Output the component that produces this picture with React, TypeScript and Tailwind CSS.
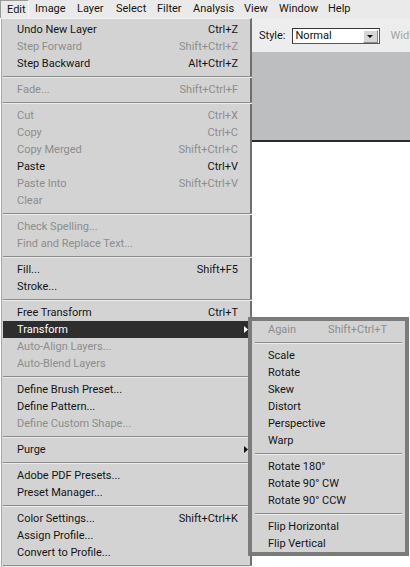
import React from "react";

type Row = { label: string; keys?: string; dim?: boolean; sub?: boolean; active?: boolean } | "sep";

const mainItems: Row[] = [
  { label: "Undo New Layer", keys: "Ctrl+Z" },
  { label: "Step Forward", keys: "Shift+Ctrl+Z", dim: true },
  { label: "Step Backward", keys: "Alt+Ctrl+Z" },
  "sep",
  { label: "Fade...", keys: "Shift+Ctrl+F", dim: true },
  "sep",
  { label: "Cut", keys: "Ctrl+X", dim: true },
  { label: "Copy", keys: "Ctrl+C", dim: true },
  { label: "Copy Merged", keys: "Shift+Ctrl+C", dim: true },
  { label: "Paste", keys: "Ctrl+V" },
  { label: "Paste Into", keys: "Shift+Ctrl+V", dim: true },
  { label: "Clear", dim: true },
  "sep",
  { label: "Check Spelling...", dim: true },
  { label: "Find and Replace Text...", dim: true },
  "sep",
  { label: "Fill...", keys: "Shift+F5" },
  { label: "Stroke..." },
  "sep",
  { label: "Free Transform", keys: "Ctrl+T" },
  { label: "Transform", sub: true, active: true },
  { label: "Auto-Align Layers...", dim: true },
  { label: "Auto-Blend Layers", dim: true },
  "sep",
  { label: "Define Brush Preset..." },
  { label: "Define Pattern..." },
  { label: "Define Custom Shape...", dim: true },
  "sep",
  { label: "Purge", sub: true },
  "sep",
  { label: "Adobe PDF Presets..." },
  { label: "Preset Manager..." },
  "sep",
  { label: "Color Settings...", keys: "Shift+Ctrl+K" },
  { label: "Assign Profile..." },
  { label: "Convert to Profile..." },
  "sep",
];

const subItems: Row[] = [
  { label: "Again", keys: "Shift+Ctrl+T", dim: true },
  "sep",
  { label: "Scale" },
  { label: "Rotate" },
  { label: "Skew" },
  { label: "Distort" },
  { label: "Perspective" },
  { label: "Warp" },
  "sep",
  { label: "Rotate 180°" },
  { label: "Rotate 90° CW" },
  { label: "Rotate 90° CCW" },
  "sep",
  { label: "Flip Horizontal" },
  { label: "Flip Vertical" },
];

const bar = [
  { t: "Edit", w: "w-[29px]", on: true },
  { t: "Image", w: "w-[42px]" },
  { t: "Layer", w: "w-[39px]" },
  { t: "Select", w: "w-[41px]" },
  { t: "Filter", w: "w-[36px]" },
  { t: "Analysis", w: "w-[51px]" },
  { t: "View", w: "w-[35px]" },
  { t: "Window", w: "w-[49px]" },
  { t: "Help", w: "w-[33px]" },
];

function Arrow({ white }: { white?: boolean }) {
  return (
    <svg width="4" height="7" viewBox="0 0 4 7" className="shrink-0">
      <path d="M0 0 L4 3.5 L0 7 Z" fill={white ? "#ffffff" : "#111111"} />
    </svg>
  );
}

function Sep({ inset }: { inset: string }) {
  return (
    <div className="h-[9px] pt-[4px]">
      <div className={`${inset} h-[2px] border-t border-t-[#8c8c8c] border-b border-b-[#ececec]`} />
    </div>
  );
}

function MenuRows({ rows, pl, pr, sepInset }: { rows: Row[]; pl: string; pr: string; sepInset: string }) {
  return (
    <>
      {rows.map((r, i) => {
        if (r === "sep") return <Sep key={i} inset={sepInset} />;
        const color = r.active ? "text-white" : r.dim ? "text-[#8d8d8d]" : "text-[#151515]";
        return (
          <div
            key={i}
            className={`h-[17px] flex items-center ${pl} ${r.sub ? "pr-[2px]" : pr} ${color} ${
              r.active ? "bg-[#2e2e2e]" : ""
            }`}
          >
            <span className="flex-1 whitespace-nowrap">{r.label}</span>
            {r.keys && <span className="whitespace-nowrap">{r.keys}</span>}
            {r.sub && <Arrow white={r.active} />}
          </div>
        );
      })}
    </>
  );
}

export default function App() {
  return (
    <div className="relative w-[410px] h-[567px] overflow-hidden bg-white font-['Roboto','Liberation_Sans',sans-serif] text-[11px] leading-[17px] text-[#151515]">
      {/* menu bar */}
      <div className="h-[18px] flex bg-[#eaeaea]">
        {bar.map((b) => (
          <div
            key={b.t}
            className={`${b.w} h-[18px] pl-[6px] leading-[17px] ${
              b.on ? "border-t border-l border-[#9a9a9a] border-r border-r-white pl-[5px]" : ""
            }`}
          >
            {b.t}
          </div>
        ))}
      </div>

      <div className="flex">
        {/* edit menu */}
        <div className="w-[257px] h-[549px] bg-[#d3d3d3] border-l border-l-white border-t border-t-[#f2f2f2] border-r-2 border-r-[#6f6f6f]">
          <div className="h-full border-l border-l-[#ababab] pt-[2px]">
            <div className="ml-[1px] w-[247px]">
              <MenuRows rows={mainItems} pl="pl-[14px]" pr="pr-[12px]" sepInset="w-[249px]" />
            </div>
          </div>
        </div>

        {/* options bar + canvas */}
        <div className="flex-1 flex flex-col">
          <div className="h-[34px] bg-[#ededed] flex items-start pt-[10px] pl-[7px] whitespace-nowrap overflow-hidden">
            <span className="leading-[16px]">Style:</span>
            <div className="ml-[6px] w-[88px] h-[16px] bg-white border border-[#5a5a5a] border-t-[#3a3a3a] border-l-[#3a3a3a] flex items-center">
              <span className="flex-1 pl-[3px] leading-[14px] text-[#111]">Normal</span>
              <div className="w-[15px] h-[13px] mr-[1px] bg-[#d6d6d6] border border-[#8a8a8a] border-t-white border-l-white flex items-center justify-center">
                <svg width="6" height="3" viewBox="0 0 6 3">
                  <path d="M0 0 H6 L3 3 Z" fill="#111" />
                </svg>
              </div>
            </div>
            <span className="ml-[11px] leading-[16px] text-[#a3a3a3]">Width:</span>
          </div>
          <div className="h-[90px] bg-[#bdbebf] border-b-2 border-b-[#2c2c2c]" />
          <div className="flex-1 bg-white" />
        </div>
      </div>

      {/* transform submenu */}
      <div className="absolute left-[248px] top-[317px] w-[161px] h-[239px] border-4 border-[#7b7b7b] bg-[#d3d3d3]">
        <MenuRows rows={subItems} pl="pl-[16px]" pr="pr-[18px]" sepInset="mx-[3px]" />
      </div>
    </div>
  );
}
